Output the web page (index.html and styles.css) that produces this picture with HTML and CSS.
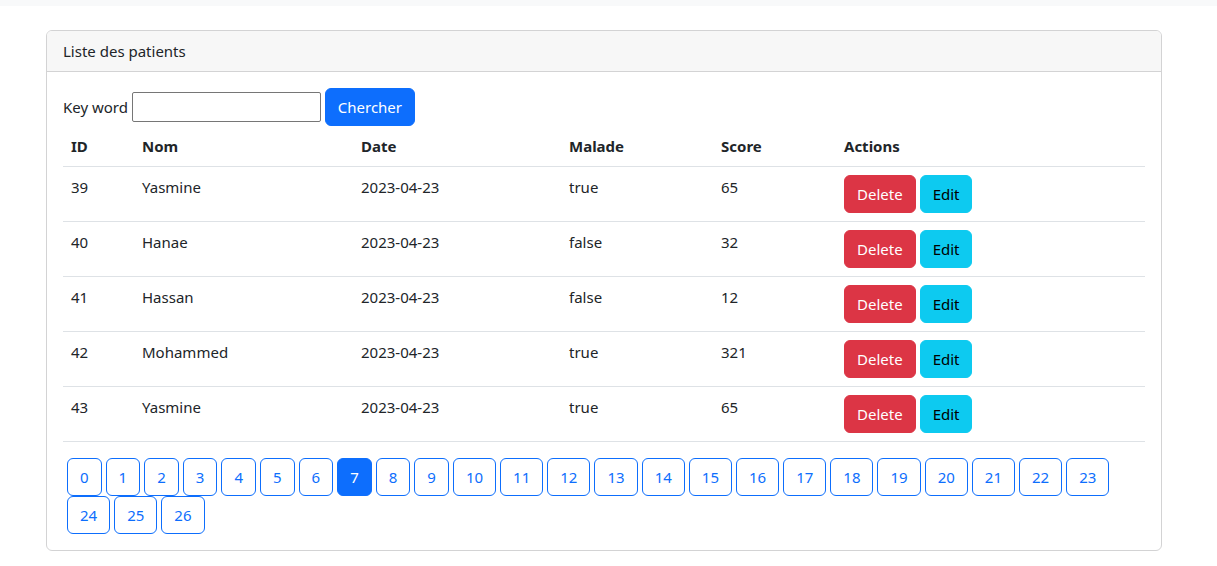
FILE: index.html
```html
<!DOCTYPE html>
<html lang="fr">
<head>
<meta charset="utf-8">
<title>Patients</title>
<link rel="stylesheet" href="styles.css">
</head>
<body>
<div class="topbar"></div>
<div class="container">
  <div class="card">
    <div class="card-header">Liste des patients</div>
    <div class="card-body">
      <form class="search">
        <label class="kw-label">Key word</label>
        <input type="text" class="kw-input">
        <button type="button" class="btn btn-primary">Chercher</button>
      </form>
      <table class="table">
        <colgroup>
          <col class="c-id"><col class="c-nom"><col class="c-date"><col class="c-malade"><col class="c-score"><col class="c-actions">
        </colgroup>
        <thead>
          <tr><th>ID</th><th>Nom</th><th>Date</th><th>Malade</th><th>Score</th><th>Actions</th></tr>
        </thead>
        <tbody>
          <tr><td>39</td><td>Yasmine</td><td>2023-04-23</td><td>true</td><td>65</td><td><div class="actions"><a class="btn btn-danger">Delete</a><a class="btn btn-info">Edit</a></div></td></tr>
          <tr><td>40</td><td>Hanae</td><td>2023-04-23</td><td>false</td><td>32</td><td><div class="actions"><a class="btn btn-danger">Delete</a><a class="btn btn-info">Edit</a></div></td></tr>
          <tr><td>41</td><td>Hassan</td><td>2023-04-23</td><td>false</td><td>12</td><td><div class="actions"><a class="btn btn-danger">Delete</a><a class="btn btn-info">Edit</a></div></td></tr>
          <tr><td>42</td><td>Mohammed</td><td>2023-04-23</td><td>true</td><td>321</td><td><div class="actions"><a class="btn btn-danger">Delete</a><a class="btn btn-info">Edit</a></div></td></tr>
          <tr><td>43</td><td>Yasmine</td><td>2023-04-23</td><td>true</td><td>65</td><td><div class="actions"><a class="btn btn-danger">Delete</a><a class="btn btn-info">Edit</a></div></td></tr>
        </tbody>
      </table>
      <ul class="pages">
        <li><a class="btn btn-outline">0</a></li>
        <li><a class="btn btn-outline">1</a></li>
        <li><a class="btn btn-outline">2</a></li>
        <li><a class="btn btn-outline">3</a></li>
        <li><a class="btn btn-outline">4</a></li>
        <li><a class="btn btn-outline">5</a></li>
        <li><a class="btn btn-outline">6</a></li>
        <li><a class="btn btn-outline active">7</a></li>
        <li><a class="btn btn-outline">8</a></li>
        <li><a class="btn btn-outline">9</a></li>
        <li><a class="btn btn-outline">10</a></li>
        <li><a class="btn btn-outline">11</a></li>
        <li><a class="btn btn-outline">12</a></li>
        <li><a class="btn btn-outline">13</a></li>
        <li><a class="btn btn-outline">14</a></li>
        <li><a class="btn btn-outline">15</a></li>
        <li><a class="btn btn-outline">16</a></li>
        <li><a class="btn btn-outline">17</a></li>
        <li><a class="btn btn-outline">18</a></li>
        <li><a class="btn btn-outline">19</a></li>
        <li><a class="btn btn-outline">20</a></li>
        <li><a class="btn btn-outline">21</a></li>
        <li><a class="btn btn-outline">22</a></li>
        <li><a class="btn btn-outline">23</a></li>
        <li><a class="btn btn-outline">24</a></li>
        <li><a class="btn btn-outline">25</a></li>
        <li><a class="btn btn-outline">26</a></li>
      </ul>
    </div>
  </div>
</div>
</body>
</html>
```

FILE: styles.css
```css
* { box-sizing: border-box; }
html, body {
  margin: 0;
  background: #fff;
  color: #212529;
  font-family: "Noto Sans", "Open Sans", sans-serif;
  font-size: 15px;
  line-height: 24px;
}
.topbar {
  height: 6px;
  background: #f8f9fa;
}
.container {
  width: 1116px;
  margin: 24px 0 0 46px;
}
.card {
  border: 1px solid #d3d3d4;
  border-radius: 6px;
  background: #fff;
}
.card-header {
  padding: 8px 16px;
  background: #f7f7f7;
  border-bottom: 1px solid #d3d3d4;
  border-radius: 5px 5px 0 0;
}
.card-body {
  padding: 16px;
}
.search {
  margin: 0;
}
.kw-label {
  display: inline-block;
}
.kw-input {
  width: 189px;
  height: 30px;
  border: 1px solid #767676;
  border-radius: 2px;
  padding: 1px 2px;
  font: inherit;
  vertical-align: baseline;
}
.btn {
  display: inline-block;
  padding: 6px 12px;
  font-family: inherit;
  font-size: 15px;
  line-height: 24px;
  border: 1px solid transparent;
  border-radius: 6px;
  text-decoration: none;
  cursor: pointer;
  text-align: center;
}
.btn-primary {
  background: #0d6efd;
  border-color: #0d6efd;
  color: #fff;
}
.btn-danger {
  background: #dc3545;
  border-color: #dc3545;
  color: #fff;
}
.btn-info {
  background: #0dcaf0;
  border-color: #0dcaf0;
  color: #000;
}
.table {
  width: 100%;
  border-collapse: collapse;
  table-layout: fixed;
  margin-bottom: 16px;
}
.c-id { width: 71px; }
.c-nom { width: 219px; }
.c-date { width: 208px; }
.c-malade { width: 152px; }
.c-score { width: 123px; }
.table th, .table td {
  padding: 8px;
  text-align: left;
  vertical-align: top;
  border-bottom: 1px solid #dee2e6;
}
.table th {
  font-weight: 700;
}
.actions {
  display: flex;
  gap: 4px;
}
.pages {
  list-style: none;
  margin: 0;
  padding: 0;
  display: flex;
  flex-wrap: wrap;
}
.pages li {
  margin-left: 4px;
}
.btn-outline {
  color: #0d6efd;
  border-color: #0d6efd;
  background: #fff;
}
.btn-outline.active {
  background: #0d6efd;
  color: #fff;
}
```
